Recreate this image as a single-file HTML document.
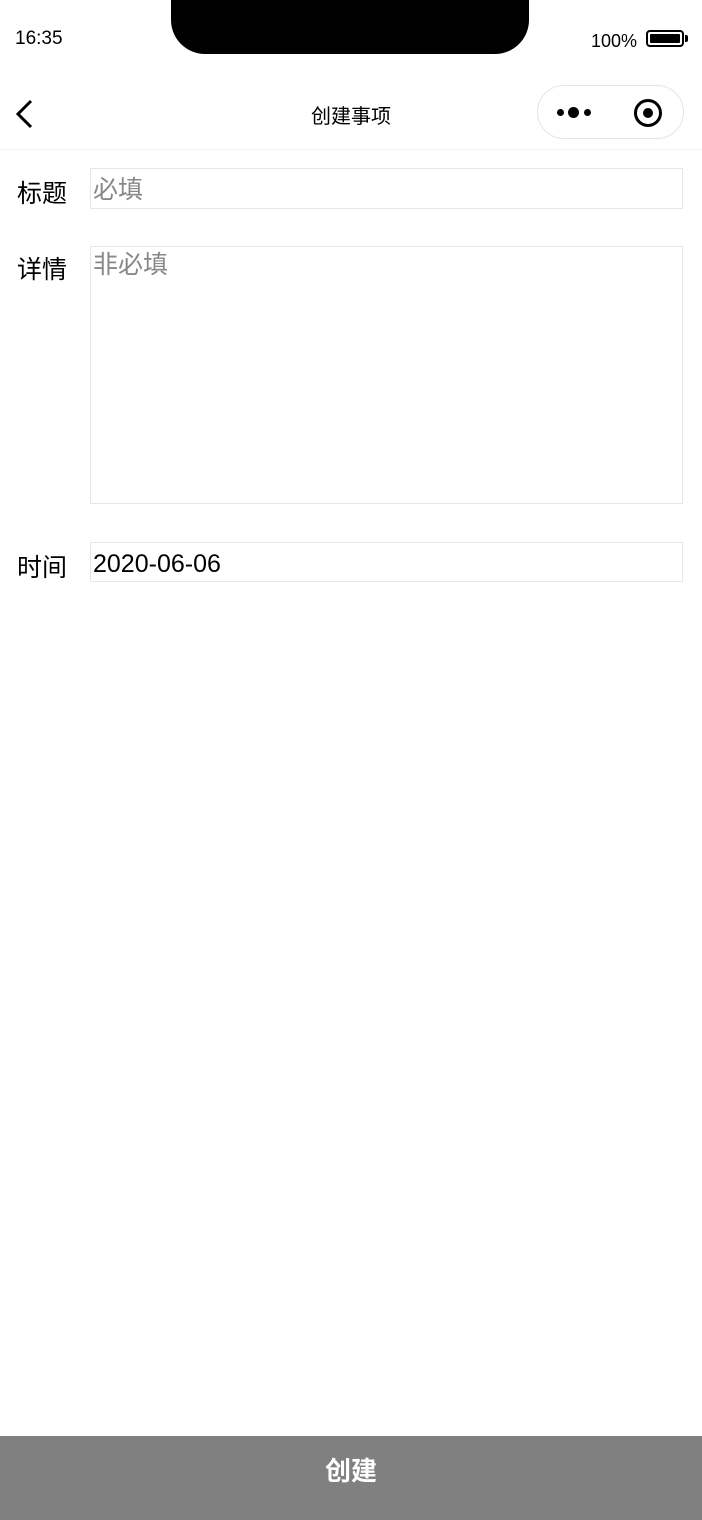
<!DOCTYPE html>
<html><head><meta charset="utf-8"><style>
*{margin:0;padding:0;box-sizing:border-box}
body{width:702px;height:1520px;background:#fff;position:relative;overflow:hidden;font-family:"Liberation Sans","Noto Sans CJK SC",sans-serif;color:#000}
.abs{position:absolute}
.notch{left:171px;top:-2px;width:358px;height:56px;background:#000;border-radius:0 0 34px 34px}
.lbl{font-size:25px;left:17px}
.box{left:90px;width:593px;border:1px solid #e6e6e6;font-size:25px;padding-left:2px}
</style></head><body>
<div class="abs" style="left:15px;top:28px;font-size:19px">16:35</div>
<div class="abs notch"></div>
<div class="abs" style="left:591px;top:31px;font-size:18px">100%</div>
<div class="abs" style="left:646px;top:30px;width:38px;height:17px;border:2px solid #000;border-radius:4px;padding:2px"><div style="width:100%;height:100%;background:#000;border-radius:1px"></div></div>
<div class="abs" style="left:685px;top:35px;width:3px;height:7px;background:#000;border-radius:0 2px 2px 0"></div>
<svg class="abs" style="left:12px;top:98px" width="24" height="32"><path d="M19 3 L6 16 L19 29" stroke="#000" stroke-width="3" fill="none"/></svg>
<div class="abs" style="left:0;width:702px;top:100px;text-align:center;font-size:20px">创建事项</div>
<div class="abs" style="left:537px;top:85px;width:147px;height:54px;border:1px solid #e5e5e5;border-radius:27px"></div>
<div class="abs" style="left:557px;top:109px;width:7px;height:7px;background:#000;border-radius:50%"></div>
<div class="abs" style="left:568px;top:107px;width:11px;height:11px;background:#000;border-radius:50%"></div>
<div class="abs" style="left:584px;top:109px;width:7px;height:7px;background:#000;border-radius:50%"></div>
<div class="abs" style="left:634px;top:99px;width:28px;height:28px;border:3px solid #000;border-radius:50%"></div>
<div class="abs" style="left:643px;top:108px;width:10px;height:10px;background:#000;border-radius:50%"></div>
<div class="abs" style="left:0;top:149px;width:702px;height:1px;background:#f3f3f3"></div>
<div class="abs lbl" style="top:174px">标题</div>
<div class="abs box" style="top:168px;height:41px;line-height:42px;color:#888">必填</div>
<div class="abs lbl" style="top:250px">详情</div>
<div class="abs box" style="top:246px;height:258px;line-height:36px;color:#888">非必填</div>
<div class="abs lbl" style="top:548px">时间</div>
<div class="abs box" style="top:542px;height:40px;line-height:43px">2020-06-06</div>
<div class="abs" style="left:0;top:1436px;width:702px;height:84px;background:#808080;color:#fff;font-size:26px;font-weight:bold;text-align:center;line-height:70px">创建</div>
</body></html>
